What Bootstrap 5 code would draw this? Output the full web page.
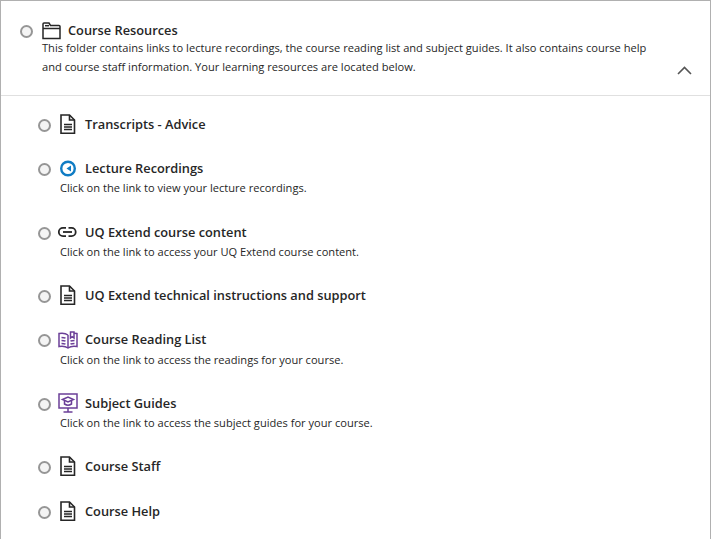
<!DOCTYPE html>
<html lang="en">
<head>
<meta charset="UTF-8" />
<title>Course Resources</title>
<link href="https://cdn.jsdelivr.net/npm/bootstrap@5.3.0/dist/css/bootstrap.min.css" rel="stylesheet" />
<script src="https://cdn.jsdelivr.net/npm/bootstrap@5.3.0/dist/js/bootstrap.bundle.min.js"></script>
<style>
  html, body { height: 100%; }
  body { background: #fff; font-family: "Open Sans", sans-serif; color: #262626; overflow: hidden; }
  .frame { height: 539px; border: 1px solid #b0b0b0; border-bottom: 0; overflow: hidden; }
  .folder-head { height: 95px; padding: 19px 18px 0 19px; border-bottom: 1px solid #e0e0e0; }
  .tick { width: 13px; height: 13px; border: 2px solid #969696; background: #f4f4f4; border-radius: 50%; flex: none; margin-top: 5px; }
  .title-text { font-size: 12.8px; font-weight: 600; line-height: 20px; color: #262626; }
  .desc-text { font-size: 11.1px; line-height: 19px; color: #262626; margin: 0; }
  .folder-desc { margin: -3px 0 0 22px; }
  .item-list { padding: 18px 0 0 37px; }
  .item-row { padding: 0 0 24.2px 0; }
  .item-ico { width: 22px; height: 20px; margin: 0 4px 0 7px; flex: none; }
  .folder-ico { margin: 1px 5px 0 8px; }
  .item-desc { margin-left: 22px; margin-top: .3px; }
  .chevron { width: 15px; height: 9px; flex: none; margin-top: 46px; margin-left: -1px; }
  .title-gap { margin-left: 1px; }
</style>
</head>
<body>
<div class="frame">
  <div class="folder-head d-flex">
    <div class="flex-grow-1">
      <div class="d-flex align-items-start">
        <span class="tick"></span>
        <svg class="item-ico folder-ico" viewBox="0 0 22 20" fill="none" stroke="#262626" stroke-width="1.5"><path d="M2 17.500V3a1 1 0 0 1 1-1h5l1.500 2.500H18a1 1 0 0 1 1 1v12z"/><path d="M2 7.500h17"/><path d="M4 4.700h4"/></svg>
        <span class="title-text">Course Resources</span>
      </div>
      <p class="folder-desc desc-text">This folder contains links to lecture recordings, the course reading list and subject guides. It also contains course help<br>and course staff information. Your learning resources are located below.</p>
    </div>
    <svg class="chevron" viewBox="0 0 15 9" fill="none" stroke="#555" stroke-width="1.6"><path d="M1 8l6.500-6.500L14 8"/></svg>
  </div>

  <div class="item-list">
    <div class="item-row">
      <div class="d-flex align-items-start"><span class="tick"></span>
        <svg class="item-ico" viewBox="0 0 22 20" fill="none" stroke="#262626" stroke-width="1.6"><path d="M3 1h8.500l5 5v13.200H3z"/><path d="M11.500 1v5h5"/><path d="M6 10.500h8M6 13h8M6 15.500h8"/></svg>
        <span class="title-text title-gap">Transcripts - Advice</span></div>
    </div>
    <div class="item-row">
      <div class="d-flex align-items-start"><span class="tick"></span>
        <svg class="item-ico" viewBox="0 0 22 20"><circle cx="10" cy="10.500" r="6.800" fill="#fff" stroke="#0f7cc4" stroke-width="2.400"/><path d="M13 7.500v6l-4.500-3z" fill="#0f7cc4"/></svg>
        <span class="title-text title-gap">Lecture Recordings</span></div>
      <p class="item-desc desc-text">Click on the link to view your lecture recordings.</p>
    </div>
    <div class="item-row">
      <div class="d-flex align-items-start"><span class="tick"></span>
        <svg class="item-ico" viewBox="0 0 22 20" fill="none" stroke="#262626" stroke-width="1.800"><path d="M8 5.800H5a4.200 4.200 0 0 0 0 8.400h3"/><path d="M10.500 5.800h3a4.200 4.200 0 0 1 0 8.400h-3"/><path d="M5 10h9"/></svg>
        <span class="title-text title-gap">UQ Extend course content</span></div>
      <p class="item-desc desc-text">Click on the link to access your UQ Extend course content.</p>
    </div>
    <div class="item-row">
      <div class="d-flex align-items-start"><span class="tick"></span>
        <svg class="item-ico" viewBox="0 0 22 20" fill="none" stroke="#262626" stroke-width="1.6"><path d="M3 1h8.500l5 5v13.200H3z"/><path d="M11.500 1v5h5"/><path d="M6 10.500h8M6 13h8M6 15.500h8"/></svg>
        <span class="title-text title-gap">UQ Extend technical instructions and support</span></div>
    </div>
    <div class="item-row">
      <div class="d-flex align-items-start"><span class="tick"></span>
        <svg class="item-ico" viewBox="0 0 22 20" fill="none" stroke="#6b3f98" stroke-width="1.500"><g transform="translate(-1 1)"><path d="M11 5C9 3.500 5 3 2 3.500v13c3-.5 7 0 9 1.500 2-1.500 6-2 9-1.500v-13c-1-.2-2-.2-3-.2"/><path d="M11 5v13"/><path d="M4.500 7.500c1.500 0 3 .2 4 .7M4.500 10.500c1.500 0 3 .2 4 .7M4.500 13.500c1.500 0 3 .2 4 .7M13.500 11c1-.4 2.500-.6 4-.6M13.500 14c1-.4 2.500-.6 4-.6"/><path d="M13.500 8V2h3.500v6l-1.750-1.300z"/></g></svg>
        <span class="title-text title-gap">Course Reading List</span></div>
      <p class="item-desc desc-text">Click on the link to access the readings for your course.</p>
    </div>
    <div class="item-row">
      <div class="d-flex align-items-start"><span class="tick"></span>
        <svg class="item-ico" viewBox="0 0 22 20" fill="none" stroke="#6b3f98" stroke-width="1.500"><g transform="translate(-1 0)"><rect x="2" y="1" width="18" height="14"/><path d="M11 15v4M6.500 19h9"/><path d="M5.500 6.500L11 4l5.500 2.500L11 9z"/><path d="M7.500 8v3c2 1.300 5 1.300 7 0V8"/></g></svg>
        <span class="title-text title-gap">Subject Guides</span></div>
      <p class="item-desc desc-text">Click on the link to access the subject guides for your course.</p>
    </div>
    <div class="item-row">
      <div class="d-flex align-items-start"><span class="tick"></span>
        <svg class="item-ico" viewBox="0 0 22 20" fill="none" stroke="#262626" stroke-width="1.6"><path d="M3 1h8.500l5 5v13.200H3z"/><path d="M11.500 1v5h5"/><path d="M6 10.500h8M6 13h8M6 15.500h8"/></svg>
        <span class="title-text title-gap">Course Staff</span></div>
    </div>
    <div class="item-row">
      <div class="d-flex align-items-start"><span class="tick"></span>
        <svg class="item-ico" viewBox="0 0 22 20" fill="none" stroke="#262626" stroke-width="1.6"><path d="M3 1h8.500l5 5v13.200H3z"/><path d="M11.500 1v5h5"/><path d="M6 10.500h8M6 13h8M6 15.500h8"/></svg>
        <span class="title-text title-gap">Course Help</span></div>
    </div>
  </div>
</div>
</body>
</html>
